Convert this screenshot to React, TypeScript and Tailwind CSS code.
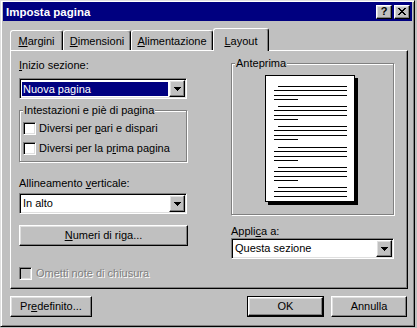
import React from "react";

const raised =
  "border border-t-white border-l-white border-r-black border-b-black shadow-[inset_-1px_-1px_0_#808080,inset_1px_1px_0_#dfdfdf]";
const sunken =
  "border border-t-[#808080] border-l-[#808080] border-r-white border-b-white shadow-[inset_1px_1px_0_#000,inset_-1px_-1px_0_#dfdfdf]";

function U({ children }: { children: React.ReactNode }) {
  return <span className="underline decoration-1 underline-offset-[1px]">{children}</span>;
}

function Arrow() {
  return (
    <svg width="7" height="4" viewBox="0 0 7 4" shapeRendering="crispEdges">
      <path d="M0 0h7v1H0zM1 1h5v1H1zM2 2h3v1H2zM3 3h1v1H3z" fill="#000" />
    </svg>
  );
}

function Combo({
  children,
  selected,
  className = "",
}: {
  children: React.ReactNode;
  selected?: boolean;
  className?: string;
}) {
  return (
    <div className={`${sunken} h-[21px] bg-white flex p-[1px] ${className}`}>
      <div className="flex-1 flex items-center min-w-0">
        {selected ? (
          <div className="flex-1 h-[14px] mx-[1px] bg-[#000080] text-white leading-[14px] pl-[1px]">
            {children}
          </div>
        ) : (
          <div className="pl-[2px] leading-[13px]">{children}</div>
        )}
      </div>
      <div className={`${raised} w-[16px] flex items-center justify-center bg-[#c0c0c0]`}>
        <Arrow />
      </div>
    </div>
  );
}

function Check({ disabled }: { disabled?: boolean }) {
  return (
    <div
      className={`${sunken} w-[13px] h-[13px] shrink-0 ${disabled ? "bg-[#c0c0c0]" : "bg-white"}`}
    />
  );
}

function Button({
  children,
  className = "",
  isDefault,
}: {
  children: React.ReactNode;
  className?: string;
  isDefault?: boolean;
}) {
  if (isDefault) {
    return (
      <div className={`border border-black h-[21px] flex ${className}`}>
        <div className={`${raised} flex-1 flex items-center justify-center leading-[13px]`}>
          {children}
        </div>
      </div>
    );
  }
  return (
    <div className={`${raised} h-[21px] flex items-center justify-center leading-[13px] ${className}`}>
      {children}
    </div>
  );
}

function Tab({
  children,
  selected,
  w,
}: {
  children: React.ReactNode;
  selected?: boolean;
  w: string;
}) {
  return (
    <div
      className={`${w} flex justify-center border-l border-t border-r border-l-white border-t-white border-r-black rounded-tl-[3px] rounded-tr-[3px] shadow-[inset_-1px_0_0_#808080] bg-[#c0c0c0] leading-[13px] ${
        selected ? "h-[23px] -mb-px relative z-10 pt-[6px]" : "h-[20px] pt-[4px]"
      }`}
    >
      {children}
    </div>
  );
}

function PagePreview() {
  const groups = [11, 31, 51, 72, 92, 112];
  const lines: React.ReactNode[] = [];
  groups.forEach((g, gi) => {
    const last = gi === groups.length - 1;
    lines.push(<rect key={`a${gi}`} x={13} y={g} width={69} height={1} fill="#000" />);
    lines.push(<rect key={`b${gi}`} x={9} y={g + 4} width={73} height={1} fill="#000" />);
    lines.push(<rect key={`c${gi}`} x={9} y={g + 9} width={73} height={1} fill="#000" />);
    if (!last) lines.push(<rect key={`d${gi}`} x={9} y={g + 13} width={24} height={1} fill="#000" />);
  });
  return (
    <svg width="93" height="130" viewBox="0 0 93 130" shapeRendering="crispEdges">
      <rect x="3" y="3" width="90" height="127" fill="#000" />
      <rect x="0" y="0" width="90" height="127" fill="#000" />
      <rect x="1" y="1" width="88" height="125" fill="#fff" />
      {lines}
    </svg>
  );
}

export default function App() {
  return (
    <div className="w-[417px] h-[328px] bg-[#c0c0c0] font-['Liberation_Sans',Arial,sans-serif] text-[11px] text-black">
      <div className="w-[415px] h-[327px] border border-t-[#dfdfdf] border-l-[#dfdfdf] border-r-black border-b-black shadow-[inset_1px_1px_0_#fff,inset_-1px_-1px_0_#808080] px-[2px] pt-[1px] flex flex-col">
        {/* Title bar */}
        <div className="h-[19px] bg-[#000080] flex items-center justify-between pl-[3px] pr-[2px]">
          <span className="text-white font-bold text-[11.5px] leading-[14px]">Imposta pagina</span>
          <div className="flex gap-[2px]">
            <div className={`${raised} w-[16px] h-[14px] bg-[#c0c0c0] flex items-center justify-center font-bold text-[11px] leading-[11px]`}>
              ?
            </div>
            <div className={`${raised} w-[16px] h-[14px] bg-[#c0c0c0] flex items-center justify-center`}>
              <svg width="8" height="7" viewBox="0 0 8 7" shapeRendering="crispEdges">
                <path
                  d="M0 0h2v1H0zM6 0h2v1H6zM1 1h2v1H1zM5 1h2v1H5zM2 2h4v1H2zM3 3h2v1H3zM2 4h4v1H2zM1 5h2v1H1zM5 5h2v1H5zM0 6h2v1H0zM6 6h2v1H6z"
                  fill="#000"
                />
              </svg>
            </div>
          </div>
        </div>

        {/* Tabs */}
        <div className="mt-[7px] ml-[7px] h-[22px] flex items-end">
          <Tab w="w-[53px]">
            <span>
              <U>M</U>argini
            </span>
          </Tab>
          <Tab w="w-[68px]">
            <span>
              <U>D</U>imensioni
            </span>
          </Tab>
          <Tab w="w-[82px]">
            <span>
              <U>A</U>limentazione
            </span>
          </Tab>
          <Tab w="w-[56px]" selected>
            <span>
              <U>L</U>ayout
            </span>
          </Tab>
        </div>

        {/* Panel */}
        <div className="ml-[7px] w-[398px] h-[239px] border border-t-white border-l-white border-r-black border-b-black shadow-[inset_-1px_-1px_0_#808080] flex pl-[8px]">
          {/* Left column */}
          <div className="w-[169px] flex flex-col">
            <div className="mt-[8px] leading-[13px]">
              <U>I</U>nizio sezione:
            </div>
            <Combo selected className="mt-[6px] w-[168px]">
              Nuova pagina
            </Combo>
            <div className="relative mt-[11px] w-[168px] h-[52px] border border-[#808080] shadow-[inset_1px_1px_0_#fff,1px_1px_0_#fff] pl-[3px] pt-[11px] flex flex-col gap-[7px]">
              <span className="absolute -top-[7px] left-[3px] bg-[#c0c0c0] px-[1px] leading-[13px]">
                Intestazioni e piè di pagina
              </span>
              <div className="flex items-center gap-[3px] leading-[13px]">
                <Check />
                <span>
                  Diversi per <U>p</U>ari e dispari
                </span>
              </div>
              <div className="flex items-center gap-[3px] leading-[13px]">
                <Check />
                <span>
                  Diversi per la p<U>r</U>ima pagina
                </span>
              </div>
            </div>
            <div className="mt-[15px] leading-[13px]">
              Allineamento <U>v</U>erticale:
            </div>
            <Combo className="mt-[3px] w-[168px]">In alto</Combo>
            <Button className="mt-[11px] w-[169px]">
              <span>
                <U>N</U>umeri di riga...
              </span>
            </Button>
            <div className="mt-[21px] flex items-center gap-[4px] leading-[13px]">
              <Check disabled />
              <span className="text-[#808080] [text-shadow:1px_1px_0_#fff]">Ometti note di chiusura</span>
            </div>
          </div>

          {/* Right column */}
          <div className="ml-[43px] w-[163px] flex flex-col">
            <div className="relative mt-[12px] h-[152px] border border-[#808080] shadow-[inset_1px_1px_0_#fff,1px_1px_0_#fff] pl-[33px] pt-[11px]">
              <span className="absolute -top-[7px] left-[3px] bg-[#c0c0c0] px-[1px] leading-[13px]">
                Anteprima
              </span>
              <PagePreview />
            </div>
            <div className="mt-[10px] leading-[13px]">
              Appli<U>c</U>a a:
            </div>
            <Combo className="w-[163px]">Questa sezione</Combo>
          </div>
        </div>

        {/* Bottom buttons */}
        <div className="mt-[7px] ml-[7px] flex">
          <Button className="w-[82px]">
            <span>
              Pr<U>e</U>definito...
            </span>
          </Button>
          <Button isDefault className="ml-[155px] w-[77px]">
            OK
          </Button>
          <Button className="ml-[7px] w-[76px]">Annulla</Button>
        </div>
      </div>
    </div>
  );
}
